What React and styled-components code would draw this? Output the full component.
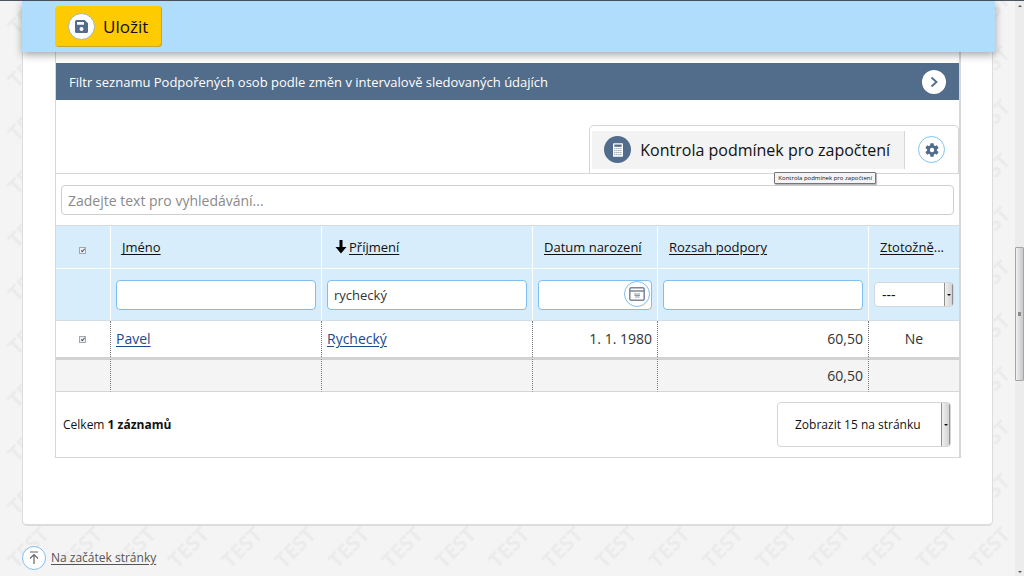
import React from "react";
import styled, { createGlobalStyle } from "styled-components";

const GlobalStyle = createGlobalStyle`
  *, *::before, *::after { box-sizing: border-box; }
  html, body, #root { height: 100%; }
  body {
    margin: 0;
    background: #f4f4f4;
    color: #111;
    font: 14px/20px "Open Sans", "Noto Sans", sans-serif;
    overflow: hidden;
  }
  button, input, select { font: inherit; color: inherit; margin: 0; }
  button { cursor: pointer; }
`;

const Window = styled.div`
  position: relative;
  display: flex;
  min-height: 100vh;
  border-top: 1px solid #4d5563;
`;

const Watermark = styled.svg`
  position: absolute;
  inset: 0;
  width: 100%;
  height: 100%;
`;

const Page = styled.div`
  position: relative;
  flex: 1;
  min-width: 0;
  padding: 0 22px;
`;

const ActionBar = styled.header`
  position: relative;
  z-index: 1;
  display: flex;
  align-items: center;
  height: 51px;
  margin-right: -2px;
  padding: 0 33px;
  background: #b0ddfc;
  box-shadow: 0 3px 8px rgba(0, 0, 0, 0.35);
`;

const SaveButton = styled.button`
  display: flex;
  align-items: center;
  gap: 8px;
  height: 41px;
  padding: 0 14px 0 13px;
  border: 0;
  border-radius: 4px;
  background: #fecb00;
  box-shadow: inset -1px -1px 0 #c9a62c;
  font-size: 17px;
`;

const RoundIcon = styled.span`
  display: flex;
  flex: none;
  align-items: center;
  justify-content: center;
  width: ${(p) => p.$size}px;
  height: ${(p) => p.$size}px;
  border: 1px solid ${(p) => p.$line || "transparent"};
  border-radius: 50%;
  background: ${(p) => p.$fill || "#fff"};
  color: ${(p) => p.$ink || "#526c8b"};
`;

const Card = styled.main`
  padding: 0 32px 66px;
  border: 1px solid #dcdcdc;
  border-width: 0 1px 2px;
  border-radius: 0 0 5px 5px;
  background: #fff;
`;

const ListPanel = styled.section`
  margin: 0 -1px 0 0;
  padding-top: 11px;
  border: 1px solid #d6d6d6;
  border-width: 0 2px 1px 1px;
  background: #fff;
`;

const FilterBar = styled.button`
  display: flex;
  align-items: center;
  justify-content: space-between;
  width: 100%;
  height: 37px;
  padding: 0 13px;
  border: 0;
  background: #526c8b;
  color: #fff;
  font-size: 13px;
  text-align: left;
`;

const ToolRow = styled.div`
  display: flex;
  justify-content: flex-end;
  height: 74px;
  padding-top: 25px;
  border-bottom: 1px solid #d6d6d6;
`;

const ToolTab = styled.div`
  display: flex;
  align-items: center;
  gap: 13px;
  padding: 0 13px 0 2px;
  border: 1px solid #d6d6d6;
  border-bottom: 0;
  border-radius: 5px 5px 0 0;
`;

const CheckButton = styled.button`
  position: relative;
  display: flex;
  align-items: center;
  gap: 9px;
  height: 38px;
  padding: 0 14px 0 12px;
  border: 0;
  border-right: 1px solid #d6d6d6;
  background: #f3f3f3;
  font-size: 16px;
`;

const Tooltip = styled.span`
  position: absolute;
  top: 41px;
  right: 28px;
  padding: 0 3px;
  border: 1px solid #767676;
  border-radius: 1px;
  background: #f4f4f8;
  box-shadow: 1px 1px 1px rgba(0, 0, 0, 0.3);
  color: #111;
  font-size: 6px;
  line-height: 10px;
  white-space: nowrap;
`;

const PlainButton = styled.button`
  display: flex;
  padding: 0;
  border: 0;
  background: none;
`;

const SearchRow = styled.div`
  padding: 11px 5px 10px;
`;

const TextField = styled.input`
  display: block;
  width: 100%;
  height: 30px;
  padding: 0 6px;
  border: 1px solid ${(p) => p.$line || "#7fbff0"};
  border-radius: 4px;
  background: #fff;
  color: #333;
  font-size: ${(p) => p.$text || 13}px;
  &::placeholder { color: #8a8a8a; opacity: 1; }
`;

const DataTable = styled.table`
  width: 100%;
  table-layout: fixed;
  border-collapse: separate;
  border-spacing: 0;
  border-top: 1px solid #d6dde2;
`;

const Column = styled.col`
  width: ${(p) => p.$width};
`;

const HeadCell = styled.th`
  height: 43px;
  padding: ${(p) => (p.$tick ? "6px 5px 0" : "0 0 0 11px")};
  border-right: 1px solid #fff;
  border-bottom: 1px solid #fff;
  background: #d8edfc;
  font-size: 13px;
  font-weight: 400;
  text-align: left;
  white-space: nowrap;
  &:last-child { border-right: 0; }
`;

const FilterCell = styled.td`
  height: 52px;
  padding: 0 5px;
  border-right: 1px solid #fff;
  border-bottom: 1px solid #d6dde2;
  background: #d8edfc;
  &:last-child { border-right: 0; }
`;

const Cell = styled.td`
  height: 36px;
  padding: 0 5px;
  border-right: 1px dotted #777;
  text-align: ${(p) => p.$align || "left"};
  color: #333;
  &:last-child { border-right: 0; }
`;

const SumCell = styled(Cell)`
  height: 35px;
  border-top: 3px solid #d2d2d2;
  border-bottom: 1px solid #d6d6d6;
  background: #f4f4f4;
`;

const SortLink = styled.a`
  color: #111;
  text-underline-offset: 2px;
`;

const SortArrow = styled.svg`
  margin: 0 2px;
  vertical-align: -2px;
`;

const RecordLink = styled.a`
  color: #1c4a8c;
  text-underline-offset: 2px;
`;

const TickBox = styled.input`
  appearance: none;
  display: block;
  position: relative;
  width: 7px;
  height: 7px;
  margin: 0 0 0 18px;
  border: 1px solid #a3a8ad;
  background: #eef1f4;
  &:checked::after {
    content: "";
    position: absolute;
    left: 2px;
    top: 0;
    width: 2px;
    height: 4px;
    border: solid #41506b;
    border-width: 0 1px 1px 0;
    transform: rotate(40deg);
  }
`;

const DateField = styled.div`
  position: relative;
`;

const DateButton = styled.button`
  position: absolute;
  top: 1px;
  right: 2px;
  padding: 0;
  border: 0;
  background: none;
`;

const SelectBox = styled.span`
  display: flex;
  width: ${(p) => p.$width || "100%"};
  height: ${(p) => p.$height}px;
  border: 1px solid #d2d6da;
  border-radius: 4px;
  background: #fff;
  overflow: hidden;
`;

const Select = styled.select`
  appearance: none;
  flex: 1;
  min-width: 0;
  padding: 0 0 0 ${(p) => p.$pad}px;
  border: 0;
  background: transparent;
`;

const SelectArrow = styled.span`
  display: flex;
  align-items: center;
  justify-content: center;
  width: 9px;
  border-left: 1px solid #8f8f8f;
  border-right: 1px solid #8f8f8f;
  background: linear-gradient(90deg, #f0f0f0, #d2d2d2);
  pointer-events: none;
  &::after {
    content: "";
    border: 2px solid transparent;
    border-top-color: #111;
    border-bottom: 0;
  }
`;

const PanelFooter = styled.footer`
  display: flex;
  align-items: center;
  justify-content: space-between;
  height: 65px;
  padding: 0 8px 0 7px;
  font-size: 12px;
`;

const TopLink = styled.a`
  display: inline-flex;
  align-items: center;
  gap: 5px;
  margin-top: 20px;
  color: #555;
  font-size: 12px;
  text-underline-offset: 2px;
`;

const ScrollTrack = styled.div`
  position: relative;
  display: flex;
  flex-direction: column;
  align-items: center;
  justify-content: space-between;
  width: 9px;
  padding: 4px 0 3px;
  background: #ececec;
`;

const ScrollThumb = styled.div`
  display: flex;
  align-items: center;
  justify-content: center;
  width: 100%;
  height: 134px;
  margin-top: 50px;
  border: 1px solid #a5a5a5;
  border-radius: 1px;
  background: linear-gradient(90deg, #f0f0f0, #c8c8cc);
`;

const Grip = styled.span`
  width: 3px;
  height: 4px;
  background: #8a8a8a;
`;

const Arrow = styled.span`
  border: 2px solid transparent;
  border-${(p) => (p.$up ? "bottom" : "top")}-color: #555;
  border-${(p) => (p.$up ? "top" : "bottom")}: 0;
`;

const ToggleIcon = () => (
  <svg width="10" height="12" viewBox="0 0 10 12" fill="none" stroke="currentColor" strokeWidth="1.8">
    <path d="M2.5 1.5 7.5 6l-5 4.5" />
  </svg>
);

const SaveIcon = () => (
  <svg width="13" height="13" viewBox="0 0 13 13">
    <path fill="currentColor" fillRule="evenodd" d="M1.5 0H9.6L13 3.2V11.5Q13 13 11.500 13H1.500Q0 13 0 11.500V1.500Q0 0 1.500 0ZM2 2V4.800H9V2ZM6.500 7A2 2 0 1 0 6.500 11A2 2 0 1 0 6.500 7Z" />
  </svg>
);

const CalculatorIcon = () => (
  <svg width="10" height="14" viewBox="0 0 11 15">
    <rect width="11" height="15" rx="1" fill="#fff" />
    <rect x="1.5" y="1.500" width="8" height="2.500" fill="#526c8b" />
    {[5.5, 7.7, 9.9, 12.1].map((y) =>
      [1.5, 3.7, 5.9, 8.1].map((x) => (
        <rect key={`${x}-${y}`} x={x} y={y} width="1.100" height="1" fill="#526c8b" />
      ))
    )}
  </svg>
);

const GearIcon = () => (
  <svg width="14" height="14" viewBox="0 0 14 14" fill="currentColor">
    {[0, 60, 120].map((a) => (
      <rect key={a} x="5.2" y="0.3" width="3.600" height="13.400" rx="0.700" transform={`rotate(${a} 7 7)`} />
    ))}
    <circle cx="7" cy="7" r="5" />
    <circle cx="7" cy="7" r="2.200" fill="#fff" />
  </svg>
);

const CalendarIcon = () => (
  <svg width="16" height="14" viewBox="0 0 16 14">
    <rect x="0.8" y="0.800" width="14.400" height="12.400" rx="1.500" fill="#fff" stroke="#7b8797" strokeWidth="1.500" />
    <path d="M1 4H15" stroke="#7b8797" strokeWidth="1.500" />
    <path d="M5 7H11M5.500 8.500H11M6 10H10.500" stroke="#8f9aa8" strokeWidth="1.100" />
  </svg>
);

const TopIcon = () => (
  <svg width="12" height="14" viewBox="0 0 12 14" fill="none" stroke="currentColor" strokeWidth="1.2">
    <path d="M2 1H10M6 13V3.500M2 7.500 6 3.500 10 7.500" />
  </svg>
);

export default function App() {
  return (
    <>
      <GlobalStyle />
      <Window>
        <Watermark aria-hidden="true">
          <defs>
            <pattern id="stamp" width="53.4" height="53.4" x="2" y="-14" patternUnits="userSpaceOnUse">
              <text x="26" y="34" textAnchor="middle" transform="rotate(-45 26 26)" fontFamily="Open Sans" fontSize="21" fontWeight="700" fill="#ebebeb">
                TEST
              </text>
            </pattern>
          </defs>
          <rect width="100%" height="100%" fill="url(#stamp)" />
        </Watermark>
        <Page>
          <ActionBar>
            <SaveButton type="button">
              <RoundIcon $size={27} $line="#9db4bd"><SaveIcon /></RoundIcon>
              Uložit
            </SaveButton>
          </ActionBar>
          <Card>
            <ListPanel>
              <FilterBar type="button">
                Filtr seznamu Podpořených osob podle změn v intervalově sledovaných údajích
                <RoundIcon $size={24}><ToggleIcon /></RoundIcon>
              </FilterBar>
              <ToolRow>
                <ToolTab>
                  <CheckButton type="button">
                    <RoundIcon $size={27} $fill="#526c8b"><CalculatorIcon /></RoundIcon>
                    Kontrola podmínek pro započtení
                    <Tooltip role="tooltip">Kontrola podmínek pro započtení</Tooltip>
                  </CheckButton>
                  <PlainButton type="button" aria-label="Nastavení">
                    <RoundIcon $size={27} $line="#7fc4f0"><GearIcon /></RoundIcon>
                  </PlainButton>
                </ToolTab>
              </ToolRow>
              <SearchRow>
                <TextField $line="#cfcfcf" $text={14} aria-label="Vyhledávání" placeholder="Zadejte text pro vyhledávání..." />
              </SearchRow>
              <DataTable>
                <colgroup>
                  <Column $width="55px" />
                  <Column />
                  <Column />
                  <Column $width="125px" />
                  <Column />
                  <Column $width="90px" />
                </colgroup>
                <thead>
                  <tr>
                    <HeadCell $tick><TickBox type="checkbox" defaultChecked aria-label="Vybrat vše" /></HeadCell>
                    <HeadCell><SortLink href="#jmeno">Jméno</SortLink></HeadCell>
                    <HeadCell>
                      <SortArrow width="12" height="14" viewBox="0 0 12 14" aria-hidden="true">
                        <path d="M4.500 0H7.500V7H11.500L6 13.500 0.500 7H4.500Z" />
                      </SortArrow>
                      <SortLink href="#prijmeni">Příjmení</SortLink>
                    </HeadCell>
                    <HeadCell><SortLink href="#datum">Datum narození</SortLink></HeadCell>
                    <HeadCell><SortLink href="#rozsah">Rozsah podpory</SortLink></HeadCell>
                    <HeadCell><SortLink href="#ztotozneni">Ztotožně</SortLink>...</HeadCell>
                  </tr>
                  <tr>
                    <FilterCell />
                    <FilterCell><TextField aria-label="Jméno" /></FilterCell>
                    <FilterCell><TextField aria-label="Příjmení" defaultValue="rychecký" /></FilterCell>
                    <FilterCell>
                      <DateField>
                        <TextField aria-label="Datum narození" />
                        <DateButton type="button" aria-label="Kalendář">
                          <RoundIcon $size={26} $line="#7fbff0"><CalendarIcon /></RoundIcon>
                        </DateButton>
                      </DateField>
                    </FilterCell>
                    <FilterCell><TextField aria-label="Rozsah podpory" /></FilterCell>
                    <FilterCell>
                      <SelectBox $height={25}>
                        <Select $pad={7} aria-label="Ztotožněno"><option>---</option></Select>
                        <SelectArrow />
                      </SelectBox>
                    </FilterCell>
                  </tr>
                </thead>
                <tbody>
                  <tr>
                    <Cell><TickBox type="checkbox" defaultChecked aria-label="Vybrat řádek" /></Cell>
                    <Cell><RecordLink href="#pavel">Pavel</RecordLink></Cell>
                    <Cell><RecordLink href="#rychecky">Rychecký</RecordLink></Cell>
                    <Cell $align="right">1. 1. 1980</Cell>
                    <Cell $align="right">60,50</Cell>
                    <Cell $align="center">Ne</Cell>
                  </tr>
                </tbody>
                <tfoot>
                  <tr>
                    <SumCell />
                    <SumCell />
                    <SumCell />
                    <SumCell />
                    <SumCell $align="right">60,50</SumCell>
                    <SumCell />
                  </tr>
                </tfoot>
              </DataTable>
              <PanelFooter>
                <span>Celkem <b>1 záznamů</b></span>
                <SelectBox $height={45} $width="174px">
                  <Select $pad={17} aria-label="Počet záznamů na stránku"><option>Zobrazit 15 na stránku</option></Select>
                  <SelectArrow />
                </SelectBox>
              </PanelFooter>
            </ListPanel>
          </Card>
          <TopLink href="#top">
            <RoundIcon $size={24} $line="#7fbff0" $ink="#666"><TopIcon /></RoundIcon>
            Na začátek stránky
          </TopLink>
        </Page>
        <ScrollTrack aria-hidden="true">
          <Arrow $up />
          <ScrollThumb><Grip /></ScrollThumb>
          <Arrow />
        </ScrollTrack>
      </Window>
    </>
  );
}
